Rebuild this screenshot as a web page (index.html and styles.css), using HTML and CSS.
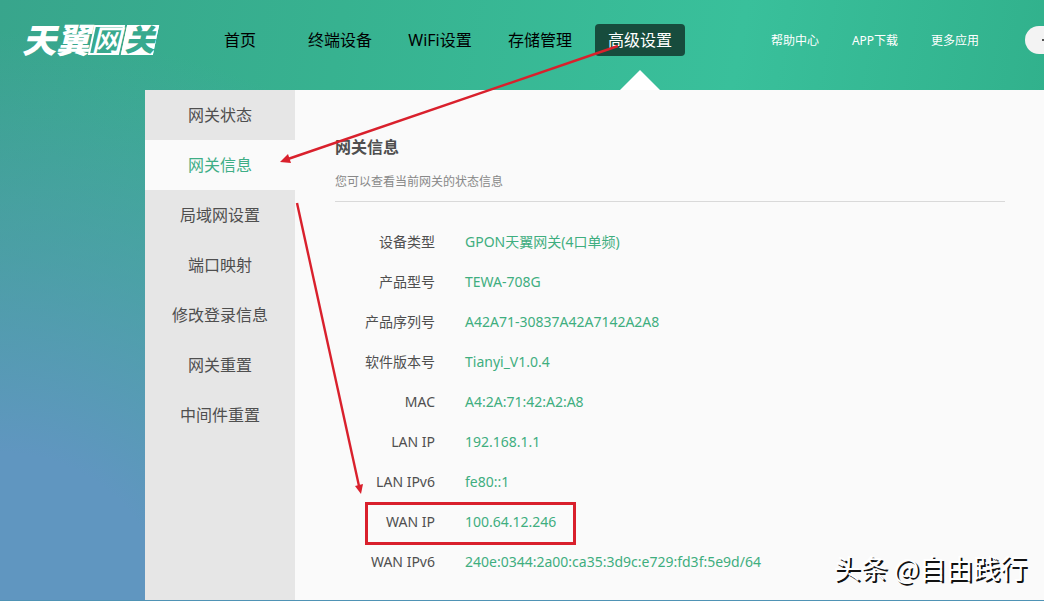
FILE: index.html
```html
<!DOCTYPE html>
<html lang="zh-CN">
<head>
    <meta charset="UTF-8">
    <meta name="viewport" content="width=device-width, initial-scale=1.0">
    <title>天翼网关</title>
    <link rel="stylesheet" href="styles.css">
</head>
<body>
    <header class="header">
        <h1 class="logo">天翼<span class="logo-line">网</span><span class="logo-fill">关</span></h1>
        <nav class="nav">
            <a href="#">首页</a>
            <a href="#">终端设备</a>
            <a href="#">WiFi设置</a>
            <a href="#">存储管理</a>
            <a href="#" class="active">高级设置</a>
        </nav>
        <nav class="links">
            <a href="#">帮助中心</a>
            <a href="#">APP下载</a>
            <a href="#">更多应用</a>
        </nav>
        <button class="user-btn" type="button" aria-label="用户"></button>
    </header>

    <main class="main">
        <aside class="sidebar">
            <a href="#">网关状态</a>
            <a href="#" class="active">网关信息</a>
            <a href="#">局域网设置</a>
            <a href="#">端口映射</a>
            <a href="#">修改登录信息</a>
            <a href="#">网关重置</a>
            <a href="#">中间件重置</a>
        </aside>

        <section class="content">
            <h2>网关信息</h2>
            <p class="desc">您可以查看当前网关的状态信息</p>
            <table class="info">
                <tr><th scope="row">设备类型</th><td>GPON天翼网关(4口单频)</td></tr>
                <tr><th scope="row">产品型号</th><td>TEWA-708G</td></tr>
                <tr><th scope="row">产品序列号</th><td>A42A71-30837A42A7142A2A8</td></tr>
                <tr><th scope="row">软件版本号</th><td>Tianyi_V1.0.4</td></tr>
                <tr><th scope="row">MAC</th><td>A4:2A:71:42:A2:A8</td></tr>
                <tr><th scope="row">LAN IP</th><td>192.168.1.1</td></tr>
                <tr><th scope="row">LAN IPv6</th><td>fe80::1</td></tr>
                <tr><th scope="row">WAN IP</th><td>100.64.12.246</td></tr>
                <tr><th scope="row">WAN IPv6</th><td>240e:0344:2a00:ca35:3d9c:e729:fd3f:5e9d/64</td></tr>
            </table>
        </section>
    </main>

    <!-- red arrows and frame -->
    <svg class="marks" width="1044" height="601" viewBox="0 0 1044 601">
        <g fill="none" stroke="#d9202c" stroke-width="2.4">
            <path d="M618 46 L288 159"/>
            <path d="M297 203 L359 486"/>
            <rect x="366.500" y="503.500" width="208" height="40" stroke-width="3"/>
        </g>
        <g fill="#d9202c">
            <path d="M280 162 L288 154 L291 163 Z"/>
            <path d="M361 494 L355 486 L363 484 Z"/>
        </g>
    </svg>
    <p class="watermark">头条 @自由践行</p>
</body>
</html>
```

FILE: styles.css
```css
*{
    box-sizing: border-box;
}
body{
    margin: 0;
    min-height: 100vh;
    display: flex;
    flex-direction: column;
    position: relative;
    border-bottom: 1px solid #4f93b5;
    font-family: "Noto Sans", "Noto Sans CJK SC", sans-serif;
    font-size: 14px;
    color: #4f4f4f;
    background:
        radial-gradient(ellipse 620px 570px at 0 100%, #6096c0 0%, #6096c0 26%, rgba(96, 150, 192, 0.5) 60%, rgba(96, 150, 192, 0) 100%),
        linear-gradient(100deg, #38a58c 0%, #37b290 30%, #39c09b 65%, #2fad88 100%);
}
a{
    color: inherit;
    text-decoration: none;
}
.header{
    height: 90px;
    padding: 0 0 10px 22px;
    display: flex;
    align-items: center;
}
.logo{
    flex: none;
    width: 173px;
    margin: 0;
    display: flex;
    align-items: center;
    color: #fff;
    font-size: 34px;
    font-weight: 900;
    font-style: italic;
    line-height: 30px;
}
.logo span{
    position: relative;
    isolation: isolate;
    width: 33px;
    font-size: 30px;
    text-align: center;
}
.logo span::before{
    content: "";
    position: absolute;
    z-index: -1;
    inset: 0 1px;
    border: 2px solid #fff;
    transform: skewX(-12deg);
}
.logo-line{
    font-weight: 500;
}
.logo-fill{
    color: #37a98e;
}
.logo .logo-fill::before{
    inset: 0 0 0 1px;
    background-color: #fff;
}
.nav{
    display: flex;
    gap: 10px;
    color: #000;
    font-size: 16px;
}
.nav a{
    width: 90px;
    line-height: 32px;
    border-radius: 4px;
    text-align: center;
    position: relative;
}
.nav .active{
    color: #fff;
    background-color: #174c3d;
}
.nav .active::after{
    content: "";
    position: absolute;
    top: 46px;
    left: 25px;
    border: 20px solid transparent;
    border-top: 0;
    border-bottom-color: #fff;
}
.links{
    display: flex;
    margin-left: 70px;
    color: #fff;
    font-size: 12px;
}
.links a{
    width: 80px;
    text-align: center;
}
.user-btn{
    flex: 1;
    display: flex;
    align-items: center;
    justify-content: flex-end;
    margin-left: 30px;
    height: 28px;
    padding: 0;
    border: 0;
    border-radius: 14px 0 0 14px;
    background-color: #f3f3f3;
}
.user-btn::after{
    content: "";
    width: 2px;
    height: 2px;
    background-color: #555;
}
.main{
    flex: 1;
    display: flex;
    margin-left: 145px;
    background-color: #fafafa;
}
.sidebar{
    flex: none;
    width: 150px;
    background-color: #e6e6e6;
    font-size: 16px;
    text-align: center;
}
.sidebar a{
    display: block;
    line-height: 50px;
}
.sidebar .active{
    color: #3fae86;
    background-color: #fafafa;
}
.content{
    flex: 1;
    padding: 44px 39px 0 40px;
}
.content h2{
    margin: 0;
    font-size: 16px;
    line-height: 26px;
}
.desc{
    margin: 0 0 20px;
    padding: 12px 0 10px;
    border-bottom: 1px solid #d9d9d9;
    color: #888;
    font-size: 12px;
    line-height: 19px;
}
.info{
    border-collapse: collapse;
}
.info th,
.info td{
    height: 40px;
    padding: 0;
    line-height: 20px;
}
.info th{
    width: 100px;
    font-weight: 400;
    text-align: right;
}
.info td{
    padding-left: 30px;
    color: #3fae7f;
}
.marks{
    position: absolute;
    top: 0;
    left: 0;
    pointer-events: none;
}
.watermark{
    position: absolute;
    right: 17px;
    bottom: 14px;
    margin: 0;
    color: #fff;
    font-family: "Noto Sans CJK SC", sans-serif;
    font-size: 27px;
    line-height: 36px;
    text-shadow: 2px 2px 0 #111;
}
```
